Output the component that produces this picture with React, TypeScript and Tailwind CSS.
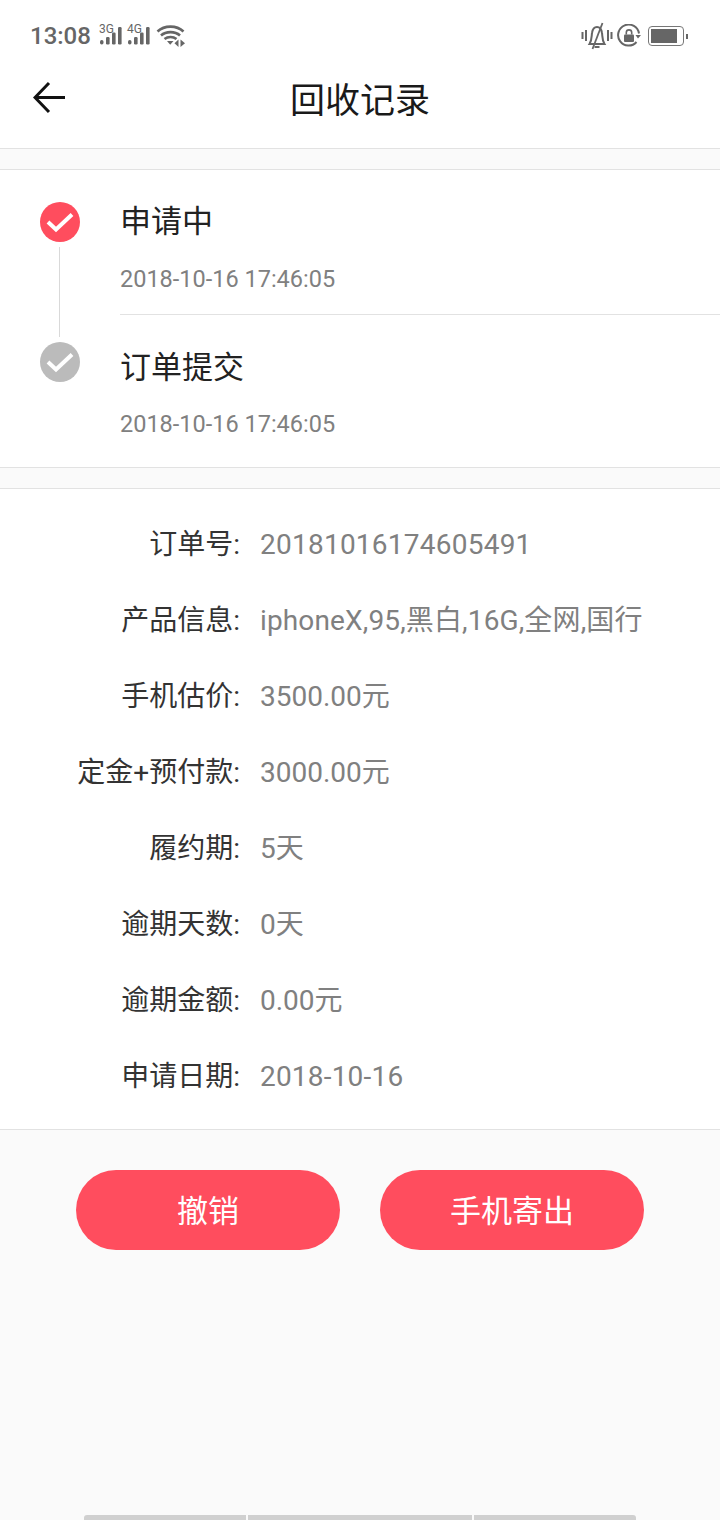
import React from 'react';

const Signal = ({ label }: { label: string }) => (
  <span className="relative w-[23px] h-[22px] block">
    <span className="absolute left-0 top-[-2px] text-[12px] leading-[12px] text-[#666]">{label}</span>
    <svg width="23" height="22" viewBox="0 0 23 22" className="absolute left-0 top-0">
      <rect x="1" y="15" width="3.5" height="4.5" rx="1.7" fill="#666" />
      <rect x="7" y="12" width="3.6" height="7.5" rx="1.2" fill="#666" />
      <rect x="13" y="7.5" width="3.6" height="12" rx="1.2" fill="#666" />
      <rect x="19" y="2" width="3.6" height="17.5" rx="1.2" fill="#666" />
    </svg>
  </span>
);

const Wifi = () => (
  <svg width="30" height="24" viewBox="0 0 30 24" fill="none">
    <path d="M1.5 7.5C8.5 1 20.5 1 27.5 7.5" stroke="#666" strokeWidth="2.6" />
    <path d="M5 11.5C10 7 19 7 24 11.5" stroke="#666" strokeWidth="2.6" />
    <path d="M8.5 15C12 12.3 17 12.3 20.5 15" stroke="#666" strokeWidth="2.6" />
    <path d="M11 17H17.5L14.2 20.8Z" fill="#666" />
    <path d="M22.5 15.5V23L18.5 19.3Z" fill="#666" />
    <path d="M24.5 15.5V23L29 19.3Z" fill="#666" />
  </svg>
);

const Bell = () => (
  <svg width="32" height="28" viewBox="0 0 32 28" fill="none" stroke="#666">
    <path d="M1.5 10V17M5 8V19M27 8V19M30.5 10V17" strokeWidth="2" />
    <path d="M8.5 22C11 18 10.5 14 11 11C11.5 7.5 13.5 5 16 5C18.5 5 20.5 7.5 21 11C21.5 14 21 18 23.5 22Z" strokeWidth="2" />
    <path d="M13.5 25H18.5" strokeWidth="2" />
    <path d="M21.5 1L11.5 27" strokeWidth="1.8" />
  </svg>
);

const LockRotate = () => (
  <svg width="24" height="24" viewBox="0 0 24 24" fill="none">
    <path d="M19.5 18A10.5 10.5 0 1 1 22 9.5" stroke="#666" strokeWidth="2" />
    <path d="M18.5 11H24L21 14.5Z" fill="#666" />
    <rect x="7" y="10.5" width="10" height="7.5" rx="1" fill="#666" />
    <path d="M9.3 10.5V8.5C9.3 5 14.7 5 14.7 8.5V10.5" stroke="#666" strokeWidth="1.6" />
  </svg>
);

const Battery = () => (
  <span className="flex items-center">
    <span className="w-[36px] h-[20px] rounded-[4px] border border-[#777] p-[2px] flex">
      <span className="w-[26px] h-full bg-[#666]" />
    </span>
    <span className="ml-[2px] w-[2px] h-[5px] bg-[#666]" />
  </span>
);

const Check = ({ color }: { color: string }) => (
  <svg width="40" height="40" viewBox="0 0 40 40" className="block shrink-0">
    <circle cx="20" cy="20" r="20" fill={color} />
    <path d="M8 20L16 27.5L32 12.5" fill="none" stroke="#fff" strokeWidth="4" />
  </svg>
);

const rows: [string, string, string][] = [
  ['订单号:', '20181016174605491', 'tracking-[0.24px]'],
  ['产品信息:', 'iphoneX,95,黑白,16G,全网,国行', 'tracking-[0.14px]'],
  ['手机估价:', '3500.00元', ''],
  ['定金+预付款:', '3000.00元', ''],
  ['履约期:', '5天', ''],
  ['逾期天数:', '0天', ''],
  ['逾期金额:', '0.00元', ''],
  ['申请日期:', '2018-10-16', 'tracking-[0.2px]'],
];

export default function App() {
  return (
    <div className="w-[720px] h-[1520px] overflow-hidden relative bg-[#fafafa] font-['Roboto','Noto_Sans_CJK_SC',sans-serif]">
      {/* Status bar + title */}
      <div className="bg-white h-[149px] border-b border-[#e2e2e2]">
        <div className="h-[72px] pl-[30px] pr-[32px] flex items-center justify-between">
          <div className="flex items-center">
            <span className="text-[24px] font-medium text-[#666] leading-none">13:08</span>
            <span className="ml-[8px]"><Signal label="3G" /></span>
            <span className="ml-[5px]"><Signal label="4G" /></span>
            <span className="ml-[6px]"><Wifi /></span>
          </div>
          <div className="flex items-center gap-[4px]">
            <Bell />
            <LockRotate />
            <span className="ml-[3px]"><Battery /></span>
          </div>
        </div>
        <div className="h-[56px] relative flex items-center justify-center">
          <svg width="34" height="34" viewBox="0 0 34 34" fill="none" className="absolute left-[33px] top-[9px]">
            <path d="M16 2L2 16.5L16 31M2 16.5H32" stroke="#111" strokeWidth="3" />
          </svg>
          <h1 className="text-[35px] leading-none text-[#1a1a1a] pt-[2px]">回收记录</h1>
        </div>
      </div>

      {/* Timeline */}
      <div className="mt-[20px] bg-white h-[299px] border-y border-[#e2e2e2] flex">
        <div className="w-[120px] flex flex-col items-center pt-[32px]">
          <Check color="#ff4d5e" />
          <div className="w-px h-[90px] bg-[#d9d9d9] my-[5px] mr-[2px]" />
          <Check color="#bbbbbb" />
        </div>
        <div className="flex-1">
          <div className="h-[145px] border-b border-[#e2e2e2]">
            <div className="pt-[32px] text-[31px] leading-[40px] text-[#222]">申请中</div>
            <div className="mt-[22px] text-[23.5px] leading-[30px] text-[#808080]">2018-10-16 17:46:05</div>
          </div>
          <div className="pt-[33px] text-[31px] leading-[40px] text-[#222]">订单提交</div>
          <div className="mt-[21px] text-[23.5px] leading-[30px] text-[#808080]">2018-10-16 17:46:05</div>
        </div>
      </div>

      {/* Order details */}
      <div className="mt-[20px] bg-white h-[642px] border-y border-[#e2e2e2] pt-[18px]">
        {rows.map(([k, v, spacing]) => (
          <div key={k} className="h-[76px] flex items-center text-[28px]">
            <span className="w-[240px] text-right text-[#333] shrink-0 whitespace-nowrap">{k}</span>
            <span className={`ml-[20px] text-[#808080] whitespace-nowrap ${spacing}`}>{v}</span>
          </div>
        ))}
      </div>

      {/* Actions */}
      <div className="mt-[40px] flex justify-center gap-[40px]">
        <button className="w-[264px] h-[80px] rounded-full bg-[#ff4d5e] text-white text-[31px] pt-[5px]">撤销</button>
        <button className="w-[264px] h-[80px] rounded-full bg-[#ff4d5e] text-white text-[31px] pt-[5px]">手机寄出</button>
      </div>

      {/* Clipped bottom tabs */}
      <div className="absolute bottom-0 left-[84px] flex gap-[2px] h-[5px]">
        <div className="w-[162px] bg-[#d0d0d0] rounded-tl-[3px]" />
        <div className="w-[224px] bg-[#d0d0d0]" />
        <div className="w-[162px] bg-[#d0d0d0] rounded-tr-[3px]" />
      </div>
    </div>
  );
}
